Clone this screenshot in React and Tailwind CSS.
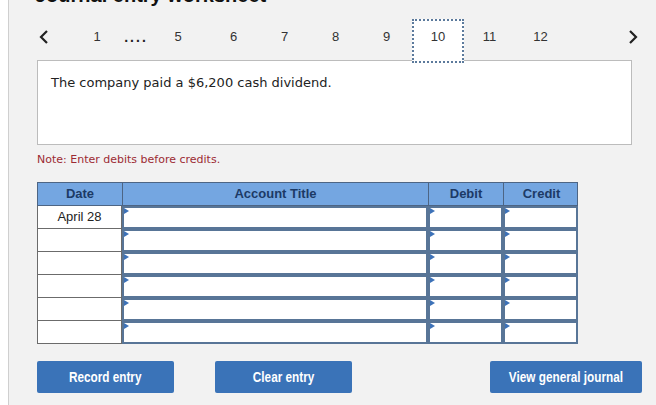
import React from 'react';

const NAV = [
  { label: '6' },
  { label: '7' },
  { label: '8' },
  { label: '9' },
  { label: '10', active: true },
  { label: '11' },
  { label: '12' },
];

const ROWS = ['April 28', '', '', '', '', ''];

const Marker = () => (
  <span className="absolute left-0 top-0 h-0 w-0 border-y-[3px] border-l-[5px] border-y-transparent border-l-[#3d72b8]" />
);

const InputCell = () => (
  <div className="relative h-[23px] border-2 border-[#587597] bg-white">
    <Marker />
  </div>
);

// no narrow face installed, so squeeze Arial bold a little
const Narrow = ({ children }) => <span className="inline-block scale-x-[0.84]">{children}</span>;

export default function App() {
  return (
    <div className="flex h-[405px] w-[656px] overflow-hidden bg-white">
      <div className="w-[8px] shrink-0 bg-white" />
      <div className="flex-1 border-l border-[#cfcfcf] bg-[#f2f2f2] font-['Liberation_Sans',Arial,sans-serif]">
        {/* title, mostly scrolled out of view */}
        <div className="-mt-[17px] ml-[26px] h-[24px] text-[20px] font-bold leading-[24px] text-[#111]">
          Journal entry worksheet
        </div>

        {/* pager */}
        <div className="mt-[13px] flex h-[40px] items-start text-[13px] text-[#333]">
          <div className="ml-[25px] flex h-[34px] w-[20px] items-center justify-center">
            <svg width="10" height="16" viewBox="0 0 10 16">
              <path d="M8 2 L2 8 L8 14" fill="none" stroke="#222" strokeWidth="2.2" />
            </svg>
          </div>
          <div className="ml-[28px] h-[34px] w-[30px] text-center leading-[34px]">1</div>
          <div className="h-[34px] w-[48px] text-center text-[14px] font-bold leading-[34px] tracking-[2px] text-[#222]">....</div>
          <div className="h-[34px] w-[36px] text-center leading-[34px]">5</div>
          <div className="ml-[12px] flex">
            {NAV.map((n) =>
              n.active ? (
                <div
                  key={n.label}
                  className="relative z-10 -mt-[1px] h-[44px] w-[52px] border-2 border-dotted border-[#5c7a9c] bg-white text-center leading-[32px]"
                >
                  {n.label}
                </div>
              ) : (
                <div key={n.label} className="h-[34px] w-[51px] text-center leading-[34px]">
                  {n.label}
                </div>
              )
            )}
          </div>
          <div className="ml-[57px] flex h-[34px] w-[20px] items-center justify-center">
            <svg width="10" height="16" viewBox="0 0 10 16">
              <path d="M2 2 L8 8 L2 14" fill="none" stroke="#222" strokeWidth="2.2" />
            </svg>
          </div>
        </div>

        {/* question */}
        <div className="ml-[28px] h-[85px] w-[595px] border border-[#bcbcbc] bg-white px-[13px] pt-[14px] font-['DejaVu_Sans',Verdana,sans-serif] text-[13px] leading-[16px] text-[#222]">
          The company paid a $6,200 cash dividend.
        </div>

        <div className="ml-[28px] mt-[8px] font-['DejaVu_Sans',Verdana,sans-serif] text-[11px] leading-[13px] text-[#9c2b33]">
          Note: Enter debits before credits.
        </div>

        {/* journal table */}
        <div className="ml-[28px] mt-[16px] w-[541px]">
          <div className="grid grid-cols-[85px_306px_75px_75px] border border-[#4d6584] bg-[#74a6e1] text-[13px] font-bold leading-[22px] text-[#1c3a66]">
            <div className="border-r border-[#4d6584] text-center">Date</div>
            <div className="border-r border-[#4d6584] text-center">Account Title</div>
            <div className="border-r border-[#4d6584] text-center">Debit</div>
            <div className="text-center">Credit</div>
          </div>
          {ROWS.map((d, i) => (
            <div key={i} className="grid grid-cols-[85px_306px_75px_75px]">
              <div className="h-[23px] border-x border-b border-[#6b6b6b] bg-white text-center text-[13px] leading-[22px] text-[#222]">
                {d}
              </div>
              <InputCell />
              <InputCell />
              <InputCell />
            </div>
          ))}
        </div>

        {/* actions */}
        <div className="ml-[28px] mt-[17px] flex w-[605px] text-[14px] font-bold text-white">
          <button className="h-[32px] w-[137px] rounded-[2px] bg-[#3a73b8]"><Narrow>Record entry</Narrow></button>
          <button className="ml-[41px] h-[32px] w-[137px] rounded-[2px] bg-[#3a73b8]"><Narrow>Clear entry</Narrow></button>
          <button className="ml-auto h-[32px] w-[152px] rounded-[2px] bg-[#3a73b8]"><Narrow>View general journal</Narrow></button>
        </div>
      </div>
    </div>
  );
}
